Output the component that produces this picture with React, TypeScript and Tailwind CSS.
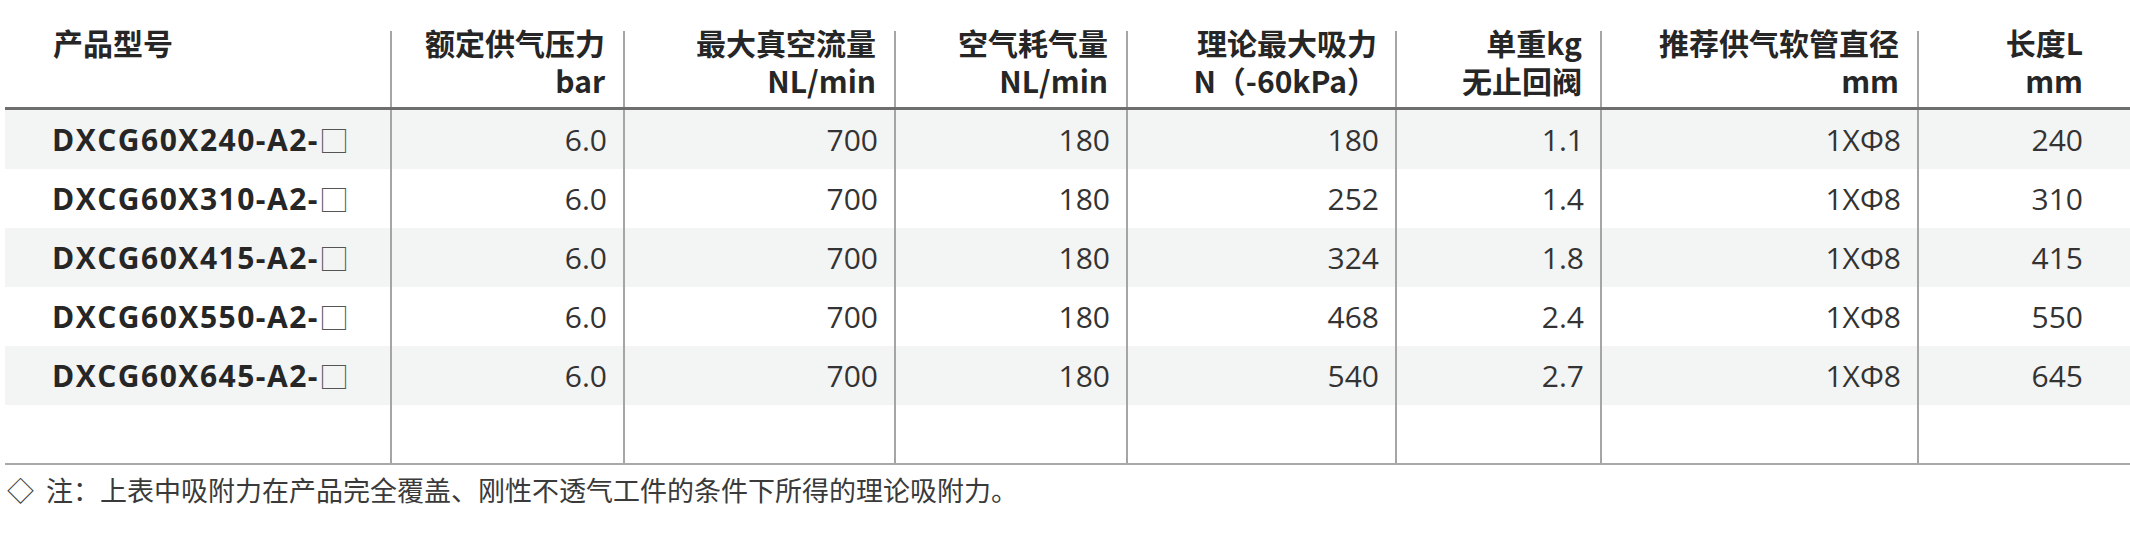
const cols =
  "grid grid-cols-[385px_233px_271px_232px_269px_205px_317px_213px]"

const headers: [string, string][] = [
  ["额定供气压力", "bar"],
  ["最大真空流量", "NL/min"],
  ["空气耗气量", "NL/min"],
  ["理论最大吸力", "N（-60kPa）"],
  ["单重kg", "无止回阀"],
  ["推荐供气软管直径", "mm"],
  ["长度L", "mm"],
]

const rows = [
  ["240", "6.0", "700", "180", "180", "1.1", "1XΦ8", "240"],
  ["310", "6.0", "700", "180", "252", "1.4", "1XΦ8", "310"],
  ["415", "6.0", "700", "180", "324", "1.8", "1XΦ8", "415"],
  ["550", "6.0", "700", "180", "468", "2.4", "1XΦ8", "550"],
  ["645", "6.0", "700", "180", "540", "2.7", "1XΦ8", "645"],
]

export default function App() {
  return (
    <div className="h-[533px] w-[2130px] overflow-hidden bg-white text-[#2a2a2a]">
      <div className="ml-[5px] w-[2125px]">
        {/* header */}
        <div
          className={
            cols +
            " h-[110px] border-b-[3px] border-[#6e6e6e] font-['Noto_Sans_CJK_SC',sans-serif] text-[30px] font-semibold text-[#262626]"
          }
        >
          <div className="pl-[48px] pt-[23px] leading-[38px]">产品型号</div>
          {headers.map(([a, b], i) => (
            <div
              key={a}
              className={
                "mt-[31px] border-l-2 border-[#a5a5a5] text-right " +
                (i === headers.length - 1 ? "pr-[47px]" : "pr-[18px]")
              }
            >
              <div className="-mt-[8px] leading-[38px]">
                <div>{a}</div>
                <div>{b}</div>
              </div>
            </div>
          ))}
        </div>

        {/* body */}
        {rows.map((r, ri) => (
          <div
            key={r[0]}
            className={
              cols +
              " h-[59px] font-['Open_Sans','Noto_Sans_CJK_SC',sans-serif] text-[30px] " +
              (ri % 2 === 0 ? "bg-[#f3f4f4]" : "bg-white")
            }
          >
            <div className="flex items-center pl-[47px] font-bold tracking-[1.5px] text-[#262626]">
              DXCG60X{r[0]}-A2-
              <span className="font-['Noto_Sans_CJK_SC',sans-serif] font-light text-[#555]">□</span>
            </div>
            {r.slice(1).map((v, i) => (
              <div
                key={i}
                className={
                  "flex items-center justify-end border-l-2 border-[#a5a5a5] text-[#333] " +
                  (i === r.length - 2 ? "pr-[47px]" : "pr-[16px]")
                }
              >
                {v}
              </div>
            ))}
          </div>
        ))}

        {/* empty row */}
        <div className={cols + " h-[60px] border-b-2 border-[#a9a9a9]"}>
          <div />
          {headers.map(([a]) => (
            <div key={a} className="border-l-2 border-[#a5a5a5]" />
          ))}
        </div>
      </div>

      <p className="ml-[7px] mt-[6px] font-['Noto_Sans_CJK_SC',sans-serif] text-[27px] leading-[38px] text-[#3a3a3a]">
        ◇&nbsp;&nbsp;注：上表中吸附力在产品完全覆盖、刚性不透气工件的条件下所得的理论吸附力。
      </p>
    </div>
  )
}
